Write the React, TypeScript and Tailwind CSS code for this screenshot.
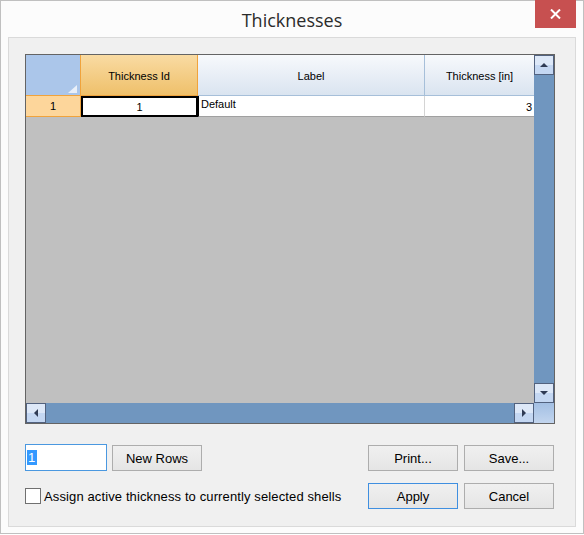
import React from "react";

function Arrow({ dir }: { dir: "up" | "down" | "left" | "right" }) {
  const pts: Record<string, string> = {
    up: "0,4 4,0 8,4",
    down: "0,0 8,0 4,4",
    left: "4,0 4,8 0,4",
    right: "0,0 0,8 4,4",
  };
  const w = dir === "up" || dir === "down" ? 8 : 4;
  const h = dir === "up" || dir === "down" ? 4 : 8;
  return (
    <svg width={w} height={h} viewBox={`0 0 ${w} ${h}`}>
      <polygon points={pts[dir]} fill="#2f3b55" />
    </svg>
  );
}

function ScrollBtn({ dir }: { dir: "up" | "down" | "left" | "right" }) {
  return (
    <div className="w-[20px] h-[20px] shrink-0 border border-[#52627f] bg-[linear-gradient(#dde8f8_50%,#c4d7f2_50%)] flex items-center justify-center">
      <Arrow dir={dir} />
    </div>
  );
}

function Btn({ label, primary }: { label: string; primary?: boolean }) {
  return (
    <div
      className={
        "w-[90px] h-[26px] border bg-[linear-gradient(#f0f0f0,#e5e5e5)] flex items-center justify-center text-[13px] text-black pt-[1px] " +
        (primary ? "border-[#3f8fe0]" : "border-[#adadad]")
      }
    >
      {label}
    </div>
  );
}

export default function App() {
  return (
    <div className="w-[584px] h-[535px] bg-white font-['Liberation_Sans',Arial,sans-serif]">
      <div className="w-[584px] h-[534px] border border-[#c0c0c0] bg-[#fcfcfc] flex flex-col px-[7px] pb-[6px]">
        {/* Title bar */}
        <div className="h-[36px] shrink-0 relative flex items-center justify-center">
          <span className="font-['Open_Sans',sans-serif] text-[18px] leading-none text-[#2b2b2b] mt-[1px]">
            Thicknesses
          </span>
          <div className="absolute right-0 top-[-1px] w-[41px] h-[28px] bg-[#c75050] flex items-center justify-center">
            <svg width="11" height="10" viewBox="0 0 11 10">
              <path d="M1 0.5 L10 9.5 M10 0.5 L1 9.5" stroke="#fff" strokeWidth="2" />
            </svg>
          </div>
        </div>

        {/* Panel */}
        <div className="flex-1 border border-[#dadada] bg-[#f0f0f0] pl-[16px] pt-[16px]">
          {/* Grid */}
          <div className="w-[530px] h-[370px] border border-[#646464] bg-[#c0c0c0] flex flex-col">
            <div className="flex h-[348px]">
              <div className="w-[508px] flex flex-col">
                {/* Header row */}
                <div className="flex h-[41px] text-[11px] text-black">
                  <div className="w-[55px] relative bg-[#abc6ea] border-r border-b border-[#f0a33c]">
                    <svg
                      className="absolute right-[3px] bottom-[2px]"
                      width="9"
                      height="8"
                      viewBox="0 0 9 8"
                    >
                      <polygon points="9,0 9,8 0,8" fill="#eaf0f9" />
                    </svg>
                  </div>
                  <div className="w-[117px] bg-[linear-gradient(#f9dba3,#efc06a)] border-r border-b border-[#f0a33c] flex items-center justify-center pt-[2px]">
                    Thickness Id
                  </div>
                  <div className="w-[227px] bg-[linear-gradient(#f7f9fc,#dae4f0)] border-r border-b border-[#a6bfd9] flex items-center justify-center pt-[2px]">
                    Label
                  </div>
                  <div className="w-[109px] bg-[linear-gradient(#f7f9fc,#dae4f0)] border-b border-[#a6bfd9] flex items-center justify-center pt-[2px]">
                    Thickness [in]
                  </div>
                </div>
                {/* Data row */}
                <div className="flex h-[21px] text-[11px] text-black">
                  <div className="w-[55px] bg-[#fdd69b] border-r border-b border-[#f0a33c] flex items-center justify-center">
                    1
                  </div>
                  <div className="w-[117px] bg-white border-2 border-black flex items-center justify-center pt-[1px]">
                    1
                  </div>
                  <div className="w-[227px] bg-white border-l border-l-black border-r border-r-[#d4d4d4] border-b border-b-[#a0a0a0] pl-[2px] leading-none pt-[3px]">
                    Default
                  </div>
                  <div className="w-[109px] bg-white border-b border-[#a0a0a0] flex items-center justify-end pr-[2px] pt-[2px]">
                    3
                  </div>
                </div>
              </div>
              {/* Vertical scrollbar */}
              <div className="w-[20px] flex flex-col bg-[#7096bf]">
                <ScrollBtn dir="up" />
                <div className="flex-1" />
                <ScrollBtn dir="down" />
              </div>
            </div>
            <div className="flex h-[20px]">
              <div className="w-[508px] flex bg-[#7096bf]">
                <ScrollBtn dir="left" />
                <div className="flex-1" />
                <ScrollBtn dir="right" />
              </div>
              <div className="w-[20px] bg-[linear-gradient(#a3bfe3,#c2d5ee)]" />
            </div>
          </div>

          {/* Row 1 */}
          <div className="w-[529px] mt-[20px] flex items-start">
            <div className="w-[82px] h-[27px] border border-[#4a98e0] bg-white flex items-center pl-[1px]">
              <span className="bg-[#3399ff] text-white text-[13px] leading-[15px] px-[1px] pr-[2px]">1</span>
            </div>
            <div className="ml-[5px] mt-[1px]">
              <Btn label="New Rows" />
            </div>
            <div className="flex-1" />
            <div className="mt-[1px] flex gap-[6px]">
              <Btn label="Print..." />
              <Btn label="Save..." />
            </div>
          </div>

          {/* Row 2 */}
          <div className="w-[529px] mt-[12px] flex items-center">
            <div className="w-[16px] h-[16px] border border-[#707070] bg-white" />
            <span className="ml-[3px] text-[13px] text-black tracking-[0.12px] pt-[1px]">
              Assign active thickness to currently selected shells
            </span>
            <div className="flex-1" />
            <div className="flex gap-[6px]">
              <Btn label="Apply" primary />
              <Btn label="Cancel" />
            </div>
          </div>
        </div>
      </div>
    </div>
  );
}
